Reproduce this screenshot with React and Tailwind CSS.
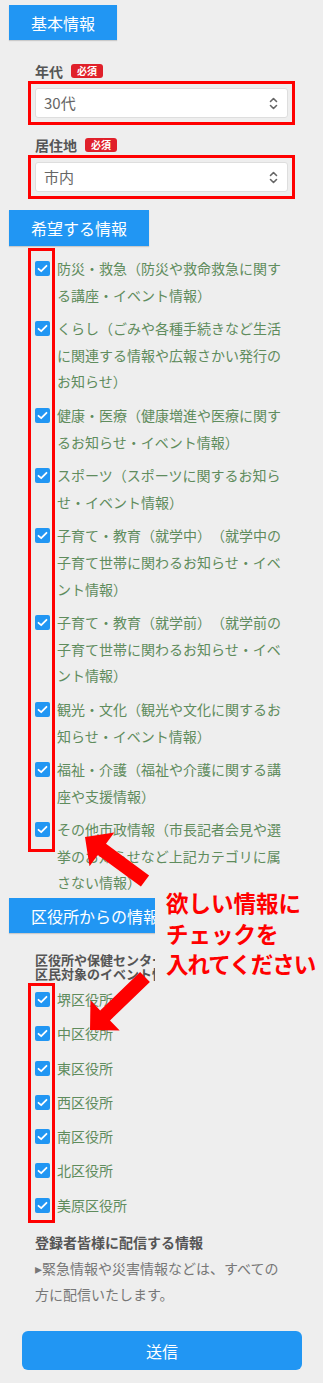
const interests = [
  '防災・救急（防災や救命救急に関する講座・イベント情報）',
  'くらし（ごみや各種手続きなど生活に関連する情報や広報さかい発行のお知らせ）',
  '健康・医療（健康増進や医療に関するお知らせ・イベント情報）',
  'スポーツ（スポーツに関するお知らせ・イベント情報）',
  '子育て・教育（就学中）（就学中の子育て世帯に関わるお知らせ・イベント情報）',
  '子育て・教育（就学前）（就学前の子育て世帯に関わるお知らせ・イベント情報）',
  '観光・文化（観光や文化に関するお知らせ・イベント情報）',
  '福祉・介護（福祉や介護に関する講座や支援情報）',
  'その他市政情報（市長記者会見や選挙のお知らせなど上記カテゴリに属さない情報）',
]

const wards = ['堺区役所', '中区役所', '東区役所', '西区役所', '南区役所', '北区役所', '美原区役所']

function SectionHeader({ children, className = '' }) {
  return (
    <div className={`ml-[9px] w-fit px-[22px] flex items-center bg-[#2196f3] text-white text-[16px] shadow-[0_1px_1px_rgba(0,0,0,0.15)] ${className}`}>
      {children}
    </div>
  )
}

function Required() {
  return (
    <span className="h-[14px] px-[6px] flex items-center rounded-[3px] bg-[#e0202a] text-white text-[10px] font-bold leading-none">
      必須
    </span>
  )
}

function SelectBox({ value }) {
  // red frame is an annotation around the select
  return (
    <div className="-m-[7px] border-[3px] border-[#ff0000] p-[4px]">
      <div className="h-[30px] bg-white rounded-[3px] border border-[#dedede] flex items-center justify-between pl-[8px] pr-[9px]">
        <span className="text-[15px] text-[#666]">{value}</span>
        <svg width="9" height="13" viewBox="0 0 9 13" fill="none" stroke="#666" strokeWidth="1.6" strokeLinecap="round" strokeLinejoin="round">
          <polyline points="1.5,4.5 4.5,1.5 7.5,4.5" />
          <polyline points="1.5,8.5 4.5,11.5 7.5,8.5" />
        </svg>
      </div>
    </div>
  )
}

function CheckItem({ label }) {
  return (
    <label className="flex gap-[7px]">
      <span className="mt-[6px] w-[15px] h-[15px] shrink-0 rounded-[2px] bg-[#2196f3] flex items-center justify-center">
        <svg width="11" height="9" viewBox="0 0 11 9" fill="none" stroke="white" strokeWidth="1.8" strokeLinecap="round" strokeLinejoin="round">
          <polyline points="1.5,4.8 4.2,7.2 9.5,1.8" />
        </svg>
      </span>
      <span className="text-[14px] leading-[26.6px] text-[#5f8c5d] [text-spacing-trim:space-all]">{label}</span>
    </label>
  )
}

export default function App() {
  return (
    <div className="w-[330px] bg-white font-['Noto_Sans_CJK_JP','Noto_Sans',sans-serif]">
      <div className="relative w-[323px] bg-[#eeeeee] pt-[5px] pb-[13px]">
        <SectionHeader className="h-[35px]">基本情報</SectionHeader>

        <div className="px-[35px]">
          <div className="mt-[21px] h-[20px] flex items-center gap-[8px]">
            <span className="text-[14px] font-bold text-[#555]">年代</span>
            <Required />
          </div>
          <div className="mt-[7px]">
            <SelectBox value="30代" />
          </div>
          <div className="mt-[17px] h-[20px] flex items-center gap-[8px]">
            <span className="text-[14px] font-bold text-[#555]">居住地</span>
            <Required />
          </div>
          <div className="mt-[7px]">
            <SelectBox value="市内" />
          </div>
        </div>

        <SectionHeader className="h-[36px] mt-[18px]">希望する情報</SectionHeader>

        <div className="relative ml-[35px] mr-[37px] mt-[9px] flex flex-col gap-[7px]">
          <div className="absolute top-[-7px] left-[-7px] w-[27px] h-[604px] border-[3px] border-[#ff0000]" />
          {interests.map((t) => (
            <CheckItem key={t} label={t} />
          ))}
        </div>

        <SectionHeader className="h-[35px] mt-[2px]">区役所からの情報</SectionHeader>

        <div className="mx-[35px] mt-[20px] text-[13px] leading-[14px] font-bold text-[#555]">
          区役所や保健センターなどが実施する
          <br />
          区民対象のイベント情報など
        </div>

        <div className="relative mx-[35px] mt-[5px] flex flex-col gap-[7.7px]">
          <div className="absolute top-[-3px] left-[-7px] w-[27px] h-[240px] border-[3px] border-[#ff0000]" />
          {wards.map((w) => (
            <CheckItem key={w} label={w} />
          ))}
        </div>

        <div className="mx-[35px] mt-[11px]">
          <p className="text-[14px] leading-[26px] font-bold text-[#555]">登録者皆様に配信する情報</p>
          <p className="text-[14px] leading-[26px] text-[#777]">▸緊急情報や災害情報などは、すべての方に配信いたします。</p>
        </div>

        <button className="mt-[24px] ml-[22px] w-[280px] h-[39px] rounded-[6px] bg-[#2196f3] text-white text-[16px] flex items-center justify-center">
          送信
        </button>

        {/* annotation overlay */}
        <div className="absolute left-[155px] top-[884px] w-[168px] h-[98px] bg-[#eeeeee] pl-[11px] pt-[3px] text-[22.5px] leading-[30.5px] font-bold text-[#ff0000] whitespace-nowrap">
          欲しい情報に
          <br />
          チェックを
          <br />
          <span className="tracking-[-1px]">入れてください</span>
        </div>
        <svg className="absolute left-0 top-0 pointer-events-none" width="323" height="1385" viewBox="0 0 323 1385">
          <polygon fill="#ff0000" points="85,837 114.3,832.5 106,843.8 149.1,875.4 140.9,886.6 97.8,855 89.5,866.3" />
          <polygon fill="#ff0000" points="90,1030 119.7,1030.5 110,1020.4 149.9,982 140.1,972 100.2,1010.4 90.5,1000.3" />
        </svg>
      </div>
    </div>
  )
}
